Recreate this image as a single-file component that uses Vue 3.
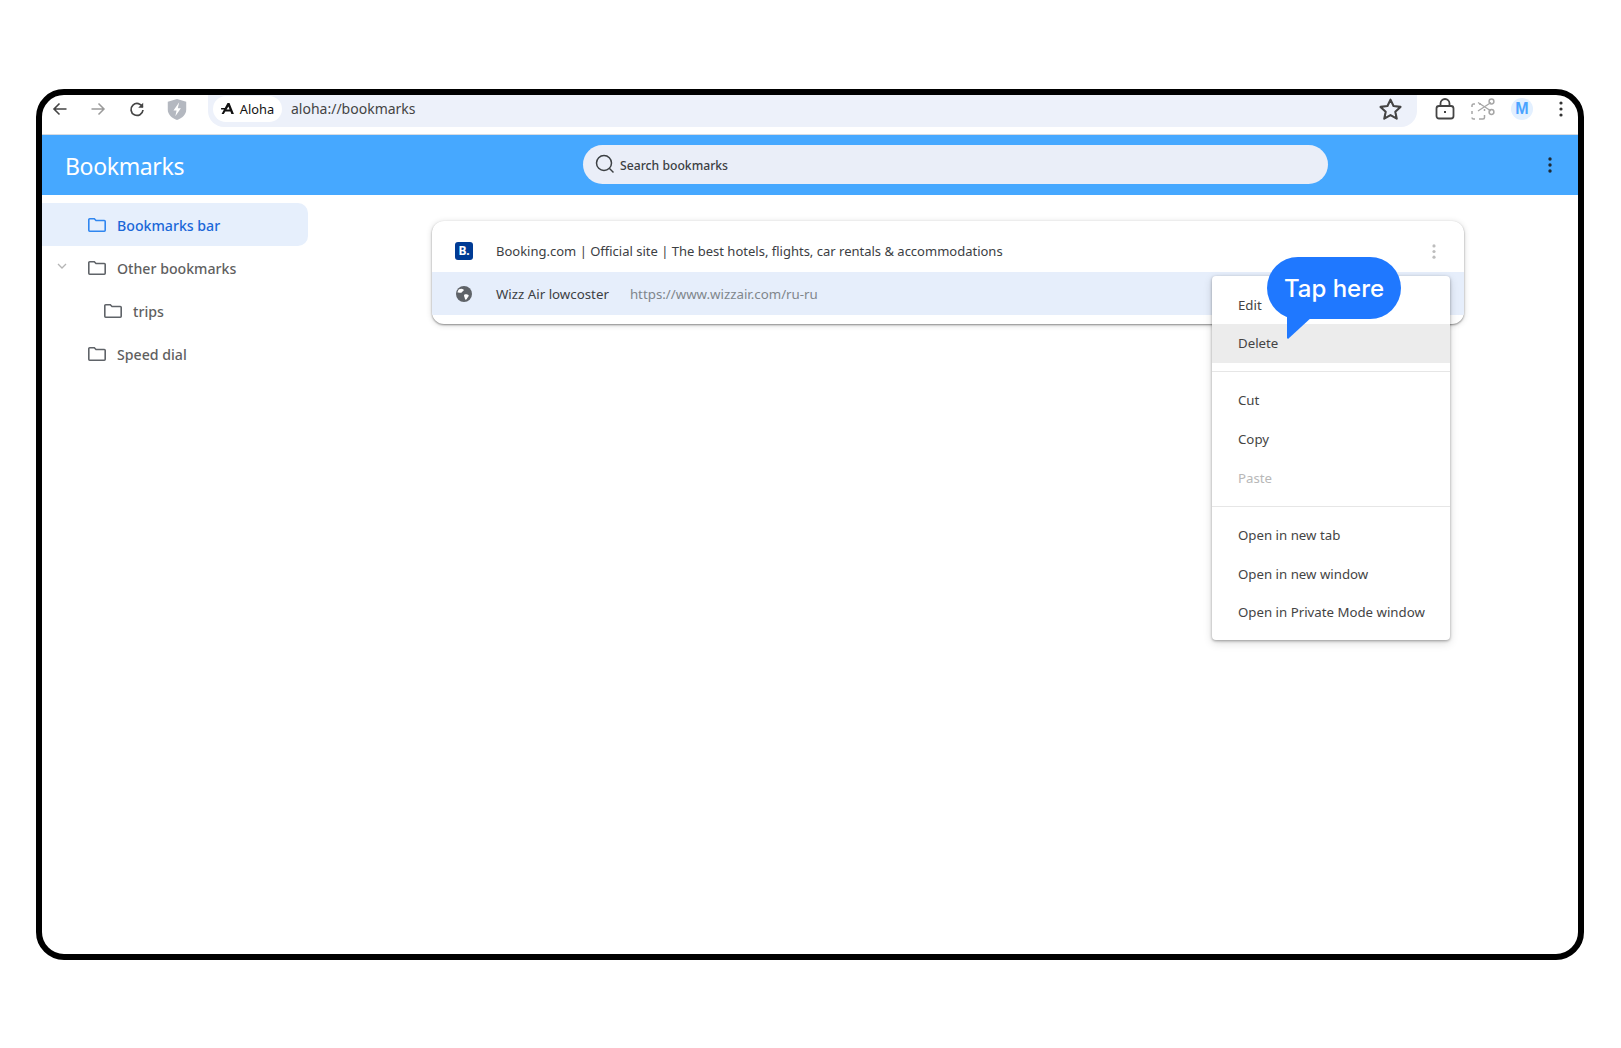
<script setup>
const tree = [
  { label: 'Bookmarks bar', active: true, depth: 0 },
  { label: 'Other bookmarks', chevron: true, depth: 0 },
  { label: 'trips', depth: 1 },
  { label: 'Speed dial', depth: 0 },
]
const groups = [
  [{ t: 'Edit' }, { t: 'Delete', hover: true }],
  [{ t: 'Cut' }, { t: 'Copy' }, { t: 'Paste', off: true }],
  [{ t: 'Open in new tab' }, { t: 'Open in new window' }, { t: 'Open in Private Mode window' }],
]
</script>

<template>
  <div class="page">
    <div class="frame">
      <div class="toolbar">
        <div class="nav">
          <svg class="ic" viewBox="0 0 18 18" fill="none" stroke="#444" stroke-width="1.6"><path d="M15.5 9H3M8.5 3.500 3 9l5.500 5.500"/></svg>
          <svg class="ic" viewBox="0 0 18 18" fill="none" stroke="#9a9a9a" stroke-width="1.5"><path d="M2.500 9H15M9.500 3.500 15 9l-5.500 5.500"/></svg>
          <svg class="ic reload" viewBox="0 0 18 18" fill="none" stroke="#444" stroke-width="1.7"><path d="M14.600 7.200A6 6 0 1 0 15 10"/><path d="M15.200 2.800v5h-5" stroke="none" fill="#444"/></svg>
          <svg class="ic shield" viewBox="0 0 18 20"><path d="M9 .5 17.300 3v7.300c0 4.300-3.600 7.600-8.300 9.200C4.300 17.900.7 14.600.7 10.300V3z" fill="#b4b8c0"/><path d="M11 3.500 5.800 11h2.800L7.500 16l5-7.200H9.700z" fill="#fff"/></svg>
        </div>
        <div class="omni">
          <div class="chip">
            <svg class="logo" viewBox="0 0 14 12"><path d="M7 0h2.200L14 12h-2.800l-1-2.700H3.800l2.300-2.200h3.200L8 3.700 3 12H.5zM0 5.400h4.500L3 7H0z" fill="#111"/></svg>
            <span>Aloha</span>
          </div>
          <span class="url">aloha://bookmarks</span>
          <svg class="star" viewBox="0 0 24 24" fill="none" stroke="#444" stroke-width="2" stroke-linejoin="round"><path d="m12 2.500 2.900 6.200 6.700.8-5 4.600 1.400 6.700-6-3.400-6 3.400 1.400-6.700-5-4.600 6.700-.8z"/></svg>
        </div>
        <div class="tools">
          <svg class="lock" viewBox="0 0 20 22" fill="none" stroke="#444" stroke-width="1.800"><rect x="1.500" y="8" width="17" height="12.500" rx="2.500"/><path d="M5.500 8V5.500a4.500 4.500 0 0 1 9 0V8"/><path d="M10 13v2" stroke-width="2"/></svg>
          <svg class="scis" viewBox="0 0 24 22" fill="none" stroke="#a6a6a6" stroke-width="1.500"><path d="M1 9V7.500A1.500 1.500 0 0 1 2.500 6H4M8 6h2M1 13v3M1 19.500A1.500 1.500 0 0 0 2.500 21H4M8 21h4A1.500 1.500 0 0 0 13.500 19.500V17M13.500 13v-2"/><path d="M7 4.500 20 13M7 13 20 4.500" stroke-width="1.300"/><circle cx="20.500" cy="3.500" r="2.400"/><circle cx="20.500" cy="14" r="2.400"/></svg>
          <div class="avatar">M</div>
          <svg class="dots" viewBox="0 0 4 16" fill="#333"><circle cx="2" cy="2" r="1.600"/><circle cx="2" cy="8" r="1.600"/><circle cx="2" cy="14" r="1.600"/></svg>
        </div>
      </div>

      <header class="head">
        <div class="title">Bookmarks</div>
        <div class="search">
          <svg class="mag" viewBox="0 0 20 20" fill="none" stroke="#3c4043" stroke-width="1.500"><circle cx="9" cy="9" r="7.500"/><path d="m14.500 14.500 4 4"/></svg>
          <span>Search bookmarks</span>
        </div>
        <svg class="dots hd" viewBox="0 0 4 16" fill="#1f2a33"><circle cx="2" cy="2" r="1.700"/><circle cx="2" cy="8" r="1.700"/><circle cx="2" cy="14" r="1.700"/></svg>
      </header>

      <div class="body">
        <aside class="side">
          <div v-for="n in tree" :key="n.label" class="node" :class="{ active: n.active, deep: n.depth }">
            <svg v-if="n.chevron" class="chev" viewBox="0 0 10 6" fill="none" stroke="#b5b5b5" stroke-width="1.300"><path d="m1 1 4 4 4-4"/></svg>
            <svg class="folder" viewBox="0 0 18 14" fill="none" stroke="currentColor" stroke-width="1.600"><path d="M.8 1.700A.9.9 0 0 1 1.700.8h4.600l1.700 1.700h8.300a.9.900 0 0 1 .9.900v8.900a.9.900 0 0 1-.9.900H1.700a.9.900 0 0 1-.9-.9z"/></svg>
            <span>{{ n.label }}</span>
          </div>
        </aside>

        <main class="main">
          <div class="card">
            <div class="row first">
              <div class="bk">B.</div>
              <span class="name long">Booking.com | Official site | The best hotels, flights, car rentals &amp; accommodations</span>
            </div>
            <div class="row sel">
              <svg class="globe" viewBox="0 0 16 16"><circle cx="8" cy="8" r="8" fill="#5f6368"/><path d="M3 3.200c2-.9 3.400-.6 4.500.3.600.6 0 1.400-.7 1.700-.9.400-.8 1.500-1.700 1.500C4 6.700 2.500 6.300 1.500 6.500 1.700 5 2.200 4 3 3.200zM8.500 8.500c1.300-.5 3.200-.2 4 .6.500.6 0 1.700-.8 2.400-.7.700-.7 2-1.800 2.200-1 .1-.9-1.400-1.300-2.300-.3-.9-1.100-2.400-.1-2.900z" fill="#fff"/></svg>
              <span class="name">Wizz Air lowcoster</span>
              <span class="link">https://www.wizzair.com/ru-ru</span>
            </div>
          </div>
          <svg class="rowdots" viewBox="0 0 4 16" fill="#bdbdbd"><circle cx="2" cy="2" r="1.700"/><circle cx="2" cy="8" r="1.700"/><circle cx="2" cy="14" r="1.700"/></svg>

          <div class="menu">
            <div v-for="(g, i) in groups" :key="i" class="group">
              <div v-for="m in g" :key="m.t" class="item" :class="{ hover: m.hover, off: m.off }">{{ m.t }}</div>
            </div>
          </div>

          <div class="bubble">
            <span>Tap here</span>
            <svg class="tail" viewBox="0 0 26 24"><path d="M0 0h26L1 23 0 22z" fill="#1f78ff"/></svg>
          </div>
        </main>
      </div>
    </div>
  </div>
</template>

<style>
html, body { margin: 0; background: #fff; }
</style>

<style scoped>
.page {
  width: 1621px; height: 1048px; padding: 89px 0 0 36px; box-sizing: border-box; overflow: hidden;
  font-family: "Noto Sans", "Open Sans", sans-serif; color: #3c4043;
}
.frame {
  width: 1548px; height: 871px; box-sizing: border-box; border: 6px solid #000; border-radius: 28px;
  overflow: hidden; background: #fff; display: flex; flex-direction: column;
}
.toolbar { height: 39px; flex: none; display: flex; align-items: flex-start; border-bottom: 1px solid #d6dbe2; }
.nav { width: 166px; flex: none; padding-left: 9px; display: flex; align-items: center; gap: 20px; height: 28px; box-sizing: border-box; }
.ic { width: 18px; height: 18px; flex: none; }
.reload { margin-left: 1px; }
.shield { width: 20px; height: 23px; margin-left: 1px; }
.omni {
  width: 1209px; height: 32px; flex: none; background: #edf1fa; border-radius: 0 0 16px 16px;
  display: flex; align-items: center; padding: 0 14px 0 5px; box-sizing: border-box;
}
.chip {
  height: 26px; width: 69px; border-radius: 13px; background: #fff; display: flex; align-items: center; justify-content: center;
  gap: 6px; font-size: 12.800px; color: #111; flex: none; margin-top: -5px;
}
.logo { width: 13px; height: 11px; }
.url { margin-left: 9px; font-size: 14px; color: #444; flex: 1; margin-top: -5px; }
.star { width: 25px; height: 25px; flex: none; margin-top: -4px; }
.tools { flex: 1; height: 28px; display: flex; align-items: center; padding-left: 18px; }
.lock { width: 20px; height: 22px; flex: none; }
.scis { width: 24px; height: 22px; flex: none; margin-left: 16px; }
.avatar {
  width: 22px; height: 22px; border-radius: 50%; background: #e3f0ff; color: #4aa3ff; font: 700 16px/22px "Liberation Sans", sans-serif;
  text-align: center; margin-left: 16px; flex: none;
}
.dots { width: 4px; height: 16px; flex: none; }
.tools .dots { margin-left: 26px; }
.head { height: 60px; flex: none; background: #46a8ff; display: flex; align-items: center; padding-left: 23px; }
.title { font-size: 23px; color: #fff; width: 518px; flex: none; letter-spacing: -.35px; padding-top: 2px; }
.search {
  width: 745px; height: 39px; border-radius: 20px; background: #eaeef8; display: flex; align-items: center; padding-left: 12px;
  box-sizing: border-box; flex: none; font-size: 12.200px; font-weight: 500; color: #3c4043; gap: 5px; margin: -2px 0 0 0;
}
.search span { padding-top: 3px; }
.mag { width: 20px; height: 20px; flex: none; }
.hd { margin-left: 220px; }
.body { flex: 1; display: flex; padding-top: 8px; min-height: 0; }
.side { width: 266px; flex: none; }
.node { height: 43px; display: flex; align-items: center; padding-left: 46px; font-size: 14.150px; font-weight: 500; color: #5f5f5f; position: relative; }
.node span { margin-left: 11px; padding-top: 2px; }
.node.deep { padding-left: 62px; }
.node.active { background: #e6effc; border-radius: 0 10px 10px 0; color: #1a67d8; }
.folder { width: 18px; height: 14px; flex: none; color: #5f6368; }
.active .folder { color: #2f86f0; }
.chev { position: absolute; left: 15px; top: 17px; width: 10px; height: 6px; }
.main { flex: 1; position: relative; padding: 18px 0 0 124px; }
.card { width: 1032px; height: 103px; border-radius: 12px; background: #fff; box-shadow: 0 1px 2px rgba(0,0,0,.4), 0 1px 6px rgba(0,0,0,.16); overflow: hidden; }
.row { display: flex; align-items: center; padding-left: 23px; font-size: 13.300px; color: #3c4043; }
.row.first { height: 51px; padding-top: 8px; box-sizing: border-box; }
.row.sel { height: 43px; background: #e6eefb; padding-left: 24px; }
.bk { width: 18px; height: 18px; border-radius: 3px; background: #003b95; color: #fff; font: 700 12px/18px "Noto Sans", sans-serif; text-align: center; flex: none; }
.globe { width: 16px; height: 16px; flex: none; }
.name { margin-left: 23px; }
.long { font-size: 13px; }
.sel .name { margin-left: 24px; }
.link { margin-left: 21px; color: #80868b; }
.rowdots { position: absolute; left: 1124px; top: 41px; width: 4px; height: 15px; }
.menu {
  position: absolute; left: 904px; top: 73px; width: 238px; height: 364px; background: #fff; border-radius: 4px;
  box-shadow: 0 1px 3px rgba(0,0,0,.35), 0 3px 10px rgba(0,0,0,.14); padding-top: 9.500px; box-sizing: border-box;
}
.group { border-bottom: 1px solid #e6e6e6; padding-bottom: 8.500px; margin-bottom: 9px; }
.group:last-child { border: 0; margin: 0; padding: 0; }
.item { height: 38.700px; line-height: 38.700px; padding-left: 26px; font-size: 13.250px; color: #444; }
.item.hover { background: #ececec; }
.item.off { color: #b8b8b8; }
.bubble {
  position: absolute; left: 959px; top: 54px; width: 134px; height: 62px; border-radius: 31px; background: #1f78ff;
  color: #fff; font: 500 24px/64px Inter, sans-serif; text-align: center;
}
.tail { position: absolute; left: 20px; top: 59px; width: 26px; height: 24px; }
</style>
